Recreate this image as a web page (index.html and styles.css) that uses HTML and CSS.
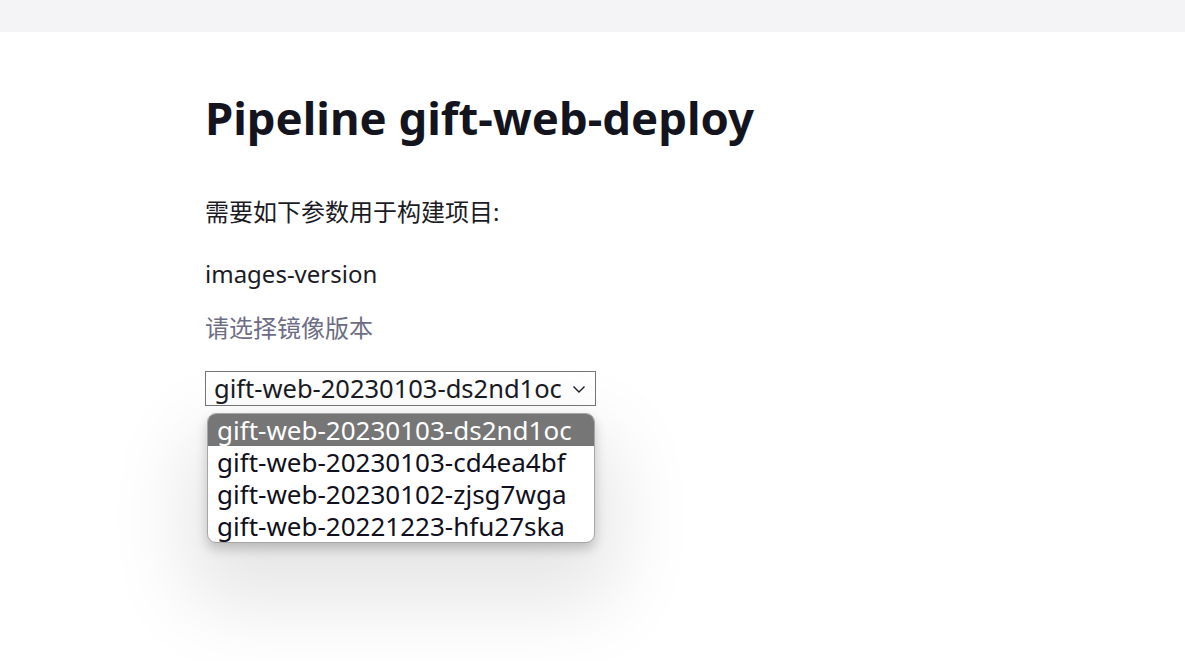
FILE: index.html
```html
<!DOCTYPE html>
<html lang="zh">
<head>
<meta charset="utf-8">
<title>Pipeline gift-web-deploy</title>
<link rel="stylesheet" href="styles.css">
</head>
<body>
<header class="topbar"></header>
<main class="content">
  <h1 class="title">Pipeline gift-web-deploy</h1>
  <p class="intro">需要如下参数用于构建项目:</p>
  <div class="param">
    <div class="param-name">images-version</div>
    <div class="param-desc">请选择镜像版本</div>
    <div class="picker">
      <div class="picker-box">
        <span class="picker-value">gift-web-20230103-ds2nd1oc</span>
        <svg class="chevron" width="14" height="10" viewBox="0 0 14 10"><path d="M1.5 2.5 L7 8 L12.5 2.5" fill="none" stroke="#1a1a24" stroke-width="1.4"/></svg>
      </div>
      <div class="menu">
        <div class="menu-item is-active">gift-web-20230103-ds2nd1oc</div>
        <div class="menu-item">gift-web-20230103-cd4ea4bf</div>
        <div class="menu-item">gift-web-20230102-zjsg7wga</div>
        <div class="menu-item">gift-web-20221223-hfu27ska</div>
      </div>
    </div>
  </div>
</main>
</body>
</html>
```
FILE: styles.css
```css
html, body {
  margin: 0;
  padding: 0;
  background: #ffffff;
}
body {
  min-height: 661px;
  font-family: "Noto Sans", "Noto Sans CJK SC", sans-serif;
  color: #1b1b25;
}
.topbar {
  height: 32px;
  background: #f4f4f6;
}
.content {
  padding: 0 0 0 205px;
}
.title {
  margin: 0;
  padding-top: 55px;
  font-size: 45.5px;
  line-height: 60px;
  font-weight: 700;
  color: #14141f;
}
.intro {
  margin: 49px 0 0;
  font-size: 24px;
  line-height: 32px;
}
.param-name {
  margin-top: 30px;
  font-size: 24px;
  line-height: 32px;
}
.param-desc {
  margin-top: 22px;
  font-size: 24px;
  line-height: 32px;
  color: #6d6d85;
}
.picker {
  position: relative;
  margin-top: 27px;
  width: 391px;
}
.picker-box {
  box-sizing: border-box;
  height: 35px;
  border: 1px solid #767676;
  display: flex;
  align-items: center;
  justify-content: space-between;
  padding: 0 9px 0 8px;
  font-size: 25.5px;
}
.picker-value {
  line-height: 33px;
}
.chevron {
  display: block;
}
.menu {
  position: absolute;
  left: 2px;
  top: 42px;
  z-index: 5;
  width: 388px;
  box-sizing: border-box;
  background: #ffffff;
  border: 1px solid #a6a6a6;
  border-radius: 9px;
  box-shadow: 0 6px 12px rgba(0,0,0,0.2), 0 40px 80px 20px rgba(0,0,0,0.10);
}
.menu-item {
  padding: 0 9px;
  font-size: 26px;
  line-height: 32px;
  height: 32px;
  color: #101020;
  white-space: nowrap;
}
.menu-item.is-active {
  background: #767676;
  color: #ffffff;
  border-radius: 8px 8px 0 0;
}
```
